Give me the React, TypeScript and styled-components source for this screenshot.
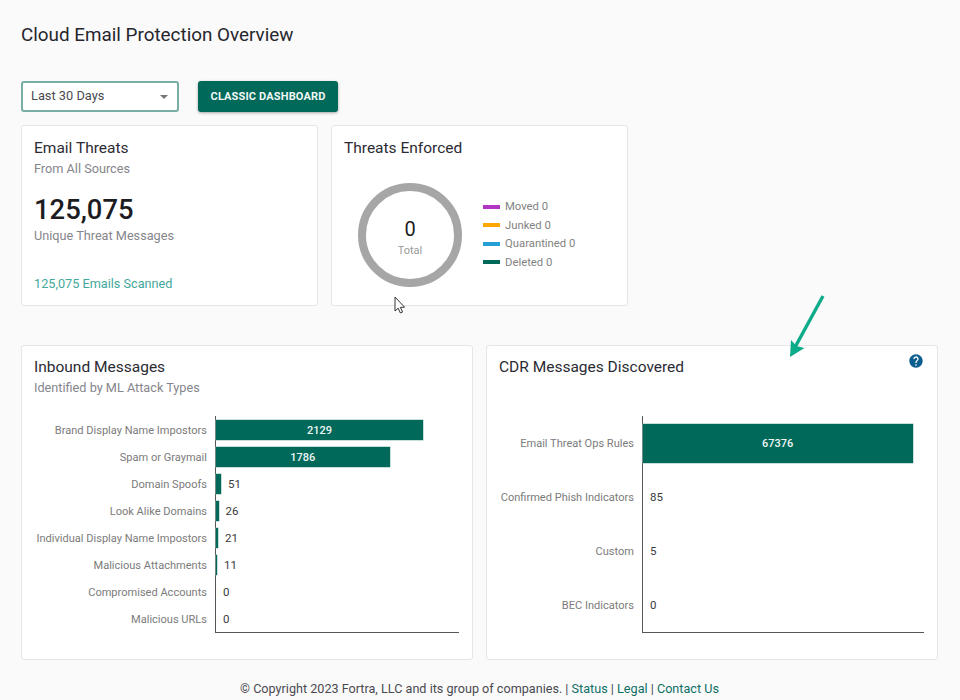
import React from "react";
import styled, { createGlobalStyle } from "styled-components";

const Global = createGlobalStyle`
  html, body { margin: 0; padding: 0; background: #fafafa; }
  body { font-family: Roboto, "Liberation Sans", sans-serif; color: #2b2b33; }
  * { box-sizing: border-box; }
`;

const Page = styled.div`
  position: relative;
  width: 960px;
  height: 700px;
  overflow: hidden;
  padding: 24px 22px 0 21px;
  display: flex;
  flex-direction: column;
`;
const Title = styled.h1`
  margin: 0;
  font-size: 18.85px;
  line-height: 22px;
  font-weight: 400;
  color: #26262c;
`;
const Controls = styled.div`
  margin-top: 35px;
  display: flex;
  gap: 19px;
`;
const Select = styled.div`
  width: 158px;
  height: 31px;
  padding: 0 9px 2px 8px;
  display: flex;
  align-items: center;
  justify-content: space-between;
  background: #fff;
  border: 2px solid #78aea4;
  border-radius: 3px;
  font-size: 12.8px;
  color: #4a4a50;
`;
const Caret = styled.span`
  width: 0;
  height: 0;
  border-left: 4.5px solid transparent;
  border-right: 4.5px solid transparent;
  border-top: 4.5px solid #757575;
  margin-top: 3px;
`;
const Button = styled.button`
  width: 140px;
  height: 31px;
  border: 0;
  padding: 0;
  border-radius: 3px;
  background: #00695a;
  color: #f2f7f6;
  font: 700 11px Roboto, sans-serif;
  letter-spacing: 0.15px;
  box-shadow: 0 1px 3px rgba(0, 0, 0, 0.35);
`;
const TopRow = styled.div`
  margin-top: 13px;
  display: flex;
  gap: 13px;
`;
const BottomRow = styled.div`
  margin-top: 39px;
  display: flex;
  gap: 13px;
`;
const Card = styled.section<{ $w: number; $h: number; $pt: number }>`
  position: relative;
  width: ${(p) => p.$w}px;
  height: ${(p) => p.$h}px;
  padding: ${(p) => p.$pt}px 13px 0 12px;
  background: #fff;
  border: 1px solid #e6e6e6;
  border-radius: 3px;
`;
const CardTitle = styled.h2`
  margin: 0;
  font-size: 15.5px;
  line-height: 20px;
  font-weight: 400;
  color: #2b2b33;
`;
const CardSub = styled.div`
  margin-top: 3px;
  font-size: 12.7px;
  line-height: 16px;
  color: #85858b;
`;
const BigNumber = styled.div`
  margin-top: 18px;
  font-size: 27.4px;
  line-height: 30px;
  font-weight: 500;
  color: #1c1c22;
`;
const Scanned = styled.div`
  margin-top: 32px;
  font-size: 12.7px;
  line-height: 16px;
  color: #43a89c;
`;
const EnforcedBody = styled.div`
  margin-top: 25px;
  padding-left: 14px;
  display: flex;
  align-items: center;
  gap: 21px;
`;
const Ring = styled.div`
  position: relative;
  width: 104px;
  height: 104px;
  flex: none;
`;
const RingText = styled.div`
  position: absolute;
  inset: 0;
  padding-top: 4px;
  display: flex;
  flex-direction: column;
  align-items: center;
  justify-content: center;
`;
const RingValue = styled.div`
  font-size: 20px;
  line-height: 24px;
  color: #1c1c22;
`;
const RingLabel = styled.div`
  margin-top: 3px;
  font-size: 11px;
  line-height: 14px;
  color: #9a9a9a;
`;
const Legend = styled.div`
  display: flex;
  flex-direction: column;
  margin-top: -1px;
`;
const LegendRow = styled.div`
  height: 18.5px;
  display: flex;
  align-items: center;
  gap: 5px;
  font-size: 11.3px;
  color: #828282;
`;
const Swatch = styled.span<{ $c: string }>`
  width: 17px;
  height: 4px;
  background: ${(p) => p.$c};
`;
const Chart = styled.div<{ $top: number; $labelW: number }>`
  margin-top: ${(p) => p.$top}px;
  display: grid;
  grid-template-columns: ${(p) => p.$labelW}px 1fr;
  column-gap: 8px;
`;
const Labels = styled.div`
  display: flex;
  flex-direction: column;
`;
const Label = styled.div<{ $h: number }>`
  height: ${(p) => p.$h}px;
  padding-top: ${(p) => p.$h % 2}px;
  display: flex;
  align-items: center;
  justify-content: flex-end;
  font-size: 11.05px;
  color: #7b7b7b;
  white-space: nowrap;
`;
const Plot = styled.div`
  border-left: 1px solid #55555b;
  border-bottom: 1px solid #55555b;
  display: flex;
  flex-direction: column;
`;
const BarRow = styled.div<{ $h: number }>`
  height: ${(p) => p.$h}px;
  padding-top: ${(p) => p.$h % 2}px;
  display: flex;
  align-items: center;
  gap: 7px;
`;
const Bar = styled.div<{ $h: number }>`
  height: ${(p) => p.$h}px;
  background: #00695a;
  color: #eef6f4;
  font-size: 11px;
  font-weight: 500;
  display: flex;
  align-items: center;
  justify-content: center;
  flex: none;
  box-shadow: 0 0 0 0.5px #8fbdb5;
`;
const BarValue = styled.span<{ $inset: boolean }>`
  margin-left: ${(p) => (p.$inset ? 7 : 0)}px;
  font-size: 11.5px;
  font-weight: 400;
  color: #3a3a3e;
`;
const HelpIcon = styled.svg`
  position: absolute;
  top: 7px;
  right: 13px;
  width: 16px;
  height: 16px;
  fill: #0b5e8e;
`;
const Footer = styled.footer`
  margin-top: 19px;
  text-align: center;
  font-size: 12.63px;
  line-height: 20px;
  color: #4a4a50;
`;
const FooterLink = styled.a`
  color: #0f6f66;
  text-decoration: none;
`;
const Overlay = styled.svg`
  position: absolute;
  pointer-events: none;
`;

const inbound = [
  ["Brand Display Name Impostors", 2129],
  ["Spam or Graymail", 1786],
  ["Domain Spoofs", 51],
  ["Look Alike Domains", 26],
  ["Individual Display Name Impostors", 21],
  ["Malicious Attachments", 11],
  ["Compromised Accounts", 0],
  ["Malicious URLs", 0],
] as const;

const cdr = [
  ["Email Threat Ops Rules", 67376],
  ["Confirmed Phish Indicators", 85],
  ["Custom", 5],
  ["BEC Indicators", 0],
] as const;

const legend = [
  ["Moved 0", "#b236c4"],
  ["Junked 0", "#ffa600"],
  ["Quarantined 0", "#24a0d6"],
  ["Deleted 0", "#00695a"],
] as const;

function BarChart(props: {
  data: readonly (readonly [string, number])[];
  rowH: number;
  barH: number;
  scale: number;
  labelW: number;
  top: number;
}) {
  const { data, rowH, barH, scale, labelW, top } = props;
  return (
    <Chart $top={top} $labelW={labelW}>
      <Labels>
        {data.map(([name]) => (
          <Label key={name} $h={rowH}>{name}</Label>
        ))}
      </Labels>
      <Plot>
        {data.map(([name, v]) => {
          const w = v * scale;
          return (
            <BarRow key={name} $h={rowH}>
              {w > 40 ? (
                <Bar $h={barH} style={{ width: w }}>{v}</Bar>
              ) : (
                <>
                  {w >= 1 && <Bar $h={barH} style={{ width: w }} />}
                  <BarValue $inset={w < 1}>{v}</BarValue>
                </>
              )}
            </BarRow>
          );
        })}
      </Plot>
    </Chart>
  );
}

export default function App() {
  return (
    <Page>
      <Global />
      <Title>Cloud Email Protection Overview</Title>
      <Controls>
        <Select>
          Last 30 Days
          <Caret />
        </Select>
        <Button>CLASSIC DASHBOARD</Button>
      </Controls>
      <TopRow>
        <Card $w={297} $h={181} $pt={12}>
          <CardTitle>Email Threats</CardTitle>
          <CardSub>From All Sources</CardSub>
          <BigNumber>125,075</BigNumber>
          <CardSub>Unique Threat Messages</CardSub>
          <Scanned>125,075 Emails Scanned</Scanned>
        </Card>
        <Card $w={297} $h={181} $pt={12}>
          <CardTitle>Threats Enforced</CardTitle>
          <EnforcedBody>
            <Ring>
              <svg width="104" height="104" viewBox="0 0 104 104">
                <circle cx="52" cy="52" r="48" fill="none" stroke="#a6a6a6" strokeWidth="8" />
              </svg>
              <RingText>
                <RingValue>0</RingValue>
                <RingLabel>Total</RingLabel>
              </RingText>
            </Ring>
            <Legend>
              {legend.map(([t, c]) => (
                <LegendRow key={t}>
                  <Swatch $c={c} />
                  {t}
                </LegendRow>
              ))}
            </Legend>
          </EnforcedBody>
        </Card>
      </TopRow>
      <BottomRow>
        <Card $w={452} $h={315} $pt={11}>
          <CardTitle>Inbound Messages</CardTitle>
          <CardSub>Identified by ML Attack Types</CardSub>
          <BarChart data={inbound} rowH={27} barH={20} scale={207 / 2129} labelW={173} top={20} />
        </Card>
        <Card $w={452} $h={315} $pt={11}>
          <CardTitle>CDR Messages Discovered</CardTitle>
          <HelpIcon viewBox="0 0 24 24">
            <path d="M12 2C6.48 2 2 6.48 2 12s4.48 10 10 10 10-4.48 10-10S17.52 2 12 2zm1 17h-2v-2h2v2zm2.07-7.75l-.9.92C13.45 12.9 13 13.5 13 15h-2v-.5c0-1.1.45-2.1 1.17-2.83l1.24-1.26c.37-.36.59-.86.59-1.41 0-1.1-.9-2-2-2s-2 .9-2 2H8c0-2.21 1.79-4 4-4s4 1.79 4 4c0 .88-.36 1.68-.93 2.25z" />
          </HelpIcon>
          <BarChart data={cdr} rowH={54} barH={39} scale={269.5 / 67376} labelW={135} top={39} />
        </Card>
      </BottomRow>
      <Footer>
        © Copyright 2023 Fortra, LLC and its group of companies. | <FooterLink>Status</FooterLink> | <FooterLink>Legal</FooterLink> | <FooterLink>Contact Us</FooterLink>
      </Footer>
      <Overlay style={{ left: 780, top: 290 }} width="50" height="72" viewBox="0 0 50 72">
        <path d="M43 6 L13.5 60" stroke="#0cab8a" strokeWidth="3.4" fill="none" />
        <path d="M10 67 L11 50 L16.5 56 L24.5 58 Z" fill="#0cab8a" />
      </Overlay>
      <Overlay style={{ left: 394, top: 296 }} width="14" height="20" viewBox="0 0 14 20">
        <path d="M1 1 L1 15 L4.2 12.2 L6.4 17 L8.6 16 L6.4 11.4 L10.6 11.2 Z" fill="#fff" stroke="#333" strokeWidth="1" />
      </Overlay>
    </Page>
  );
}
